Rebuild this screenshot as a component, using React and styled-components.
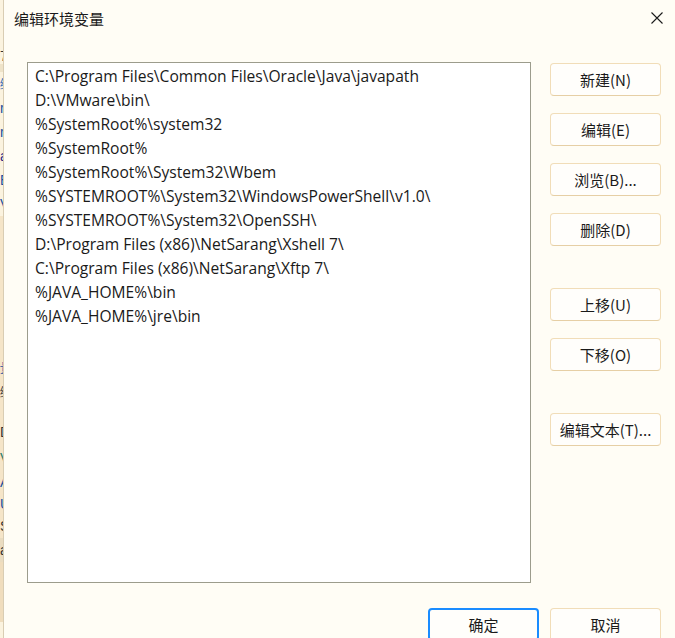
import React from "react";
import styled, { createGlobalStyle } from "styled-components";

const Global = createGlobalStyle`
  html, body { margin: 0; padding: 0; background: #fffdf5; }
  body { width: 675px; height: 638px; overflow: hidden; }
  #root { height: 638px; }
`;

const Screen = styled.div`
  display: flex;
  width: 675px;
  height: 638px;
  overflow: hidden;
  font-family: "Noto Sans CJK SC", sans-serif;
`;

const BackWindow = styled.div`
  width: 4px;
  box-sizing: border-box;
  flex: none;
  display: flex;
  flex-direction: column;
  background: #fbf3df;
  border-right: 1px solid #d9cdb3;
  overflow: hidden;
`;

const BackGlyph = styled.span`
  height: ${(p) => p.h || 24}px;
  font-family: "Liberation Sans", sans-serif;
  font-size: 14px;
  line-height: 24px;
  color: ${(p) => p.c || "#1a4fa0"};
  background: ${(p) => p.bg || "transparent"};
  white-space: nowrap;
  flex: none;
`;

const Dialog = styled.div`
  flex: 1;
  display: flex;
  flex-direction: column;
  background: #fffdf5;
  border-top-left-radius: 8px;
`;

const TitleBar = styled.div`
  height: 36px;
  display: flex;
  align-items: center;
  justify-content: space-between;
  padding: 0 10px 0 10px;
  flex: none;
`;

const Title = styled.span`
  font-size: 15px;
  color: #1a1a1a;
`;

const CloseButton = styled.span`
  width: 14px;
  height: 14px;
  display: flex;
  margin-right: 1px;
`;

const Body = styled.div`
  display: flex;
  gap: 19px;
  padding: 26px 14px 0 23px;
  flex: none;
`;

const ListBox = styled.div`
  width: 502px;
  height: 518px;
  border: 1px solid #9c9c8c;
  background: #ffffff;
  padding-top: 1px;
  box-sizing: content-box;
  display: flex;
  flex-direction: column;
`;

const ListItem = styled.div`
  height: 24px;
  line-height: 24px;
  padding-left: 7px;
  font-family: "Open Sans", "Noto Sans", sans-serif;
  font-size: 15.6px;
  color: #1a1a1a;
  white-space: nowrap;
`;

const ButtonColumn = styled.div`
  display: flex;
  flex-direction: column;
`;

const Button = styled.button`
  width: 111px;
  height: 33px;
  margin-top: ${(p) => p.mt || 0}px;
  box-sizing: border-box;
  border: ${(p) => (p.primary ? "2px solid #1a8cff" : "1px solid #f1ddb8")};
  border-bottom-color: ${(p) => (p.primary ? "#1a8cff" : "#e6cfa5")};
  border-radius: 4px;
  background: #fffefb;
  font-family: "Noto Sans CJK SC", sans-serif;
  font-size: 15px;
  color: #1a1a1a;
  padding: 0;
  display: flex;
  align-items: center;
  justify-content: center;
  flex: none;
`;

const Footer = styled.div`
  display: flex;
  justify-content: flex-end;
  gap: 11px;
  padding: 25px 14px 0 0;
`;

const paths = [
  "C:\\Program Files\\Common Files\\Oracle\\Java\\javapath",
  "D:\\VMware\\bin\\",
  "%SystemRoot%\\system32",
  "%SystemRoot%",
  "%SystemRoot%\\System32\\Wbem",
  "%SYSTEMROOT%\\System32\\WindowsPowerShell\\v1.0\\",
  "%SYSTEMROOT%\\System32\\OpenSSH\\",
  "D:\\Program Files (x86)\\NetSarang\\Xshell 7\\",
  "C:\\Program Files (x86)\\NetSarang\\Xftp 7\\",
  "%JAVA_HOME%\\bin",
  "%JAVA_HOME%\\jre\\bin",
];

const sideButtons = [
  { label: "新建(N)", mt: 1 },
  { label: "编辑(E)", mt: 17 },
  { label: "浏览(B)...", mt: 17 },
  { label: "删除(D)", mt: 17 },
  { label: "上移(U)", mt: 42 },
  { label: "下移(O)", mt: 17 },
  { label: "编辑文本(T)...", mt: 42 },
];

const backGlyphs = [
  { t: "", h: 44 },
  { t: "7", h: 20, c: "#333" },
  { t: "", h: 8, bg: "#efe3c8" },
  { t: "编", h: 24, c: "#1a5fb4" },
  { t: "r", h: 24 },
  { t: "r", h: 24 },
  { t: "a", h: 24, c: "#2a2a8a" },
  { t: "E", h: 24 },
  { t: "V", h: 24 },
  { t: "", h: 140, bg: "#f5e5c8" },
  { t: "量", h: 24, bg: "#f5e5c8" },
  { t: "编", h: 40, bg: "#f5e5c8", c: "#333" },
  { t: "D", h: 26, bg: "#f5e5c8", c: "#333" },
  { t: "V", h: 24, bg: "#f5e5c8", c: "#2a7a6a" },
  { t: "A", h: 22, bg: "#f5e5c8" },
  { t: "U", h: 22, bg: "#f5e5c8" },
  { t: "S", h: 24, bg: "#f5e5c8", c: "#333" },
  { t: "a", h: 24, bg: "#eadcc0", c: "#333" },
  { t: "", h: 60, bg: "#f0ddbd" },
];

export default function App() {
  return (
    <>
      <Global />
      <Screen>
        <BackWindow>
          {backGlyphs.map((g, i) => (
            <BackGlyph key={i} h={g.h} c={g.c} bg={g.bg}>
              {g.t}
            </BackGlyph>
          ))}
        </BackWindow>
        <Dialog>
          <TitleBar>
            <Title>编辑环境变量</Title>
            <CloseButton>
              <svg width="14" height="14" viewBox="0 0 14 14">
                <path d="M1.5 1.5 L12.5 12.5 M12.5 1.5 L1.5 12.5" stroke="#1a1a1a" strokeWidth="1.1" fill="none" />
              </svg>
            </CloseButton>
          </TitleBar>
          <Body>
            <ListBox>
              {paths.map((p) => (
                <ListItem key={p}>{p}</ListItem>
              ))}
            </ListBox>
            <ButtonColumn>
              {sideButtons.map((b) => (
                <Button key={b.label} mt={b.mt}>
                  {b.label}
                </Button>
              ))}
            </ButtonColumn>
          </Body>
          <Footer>
            <Button primary>确定</Button>
            <Button>取消</Button>
          </Footer>
        </Dialog>
      </Screen>
    </>
  );
}
